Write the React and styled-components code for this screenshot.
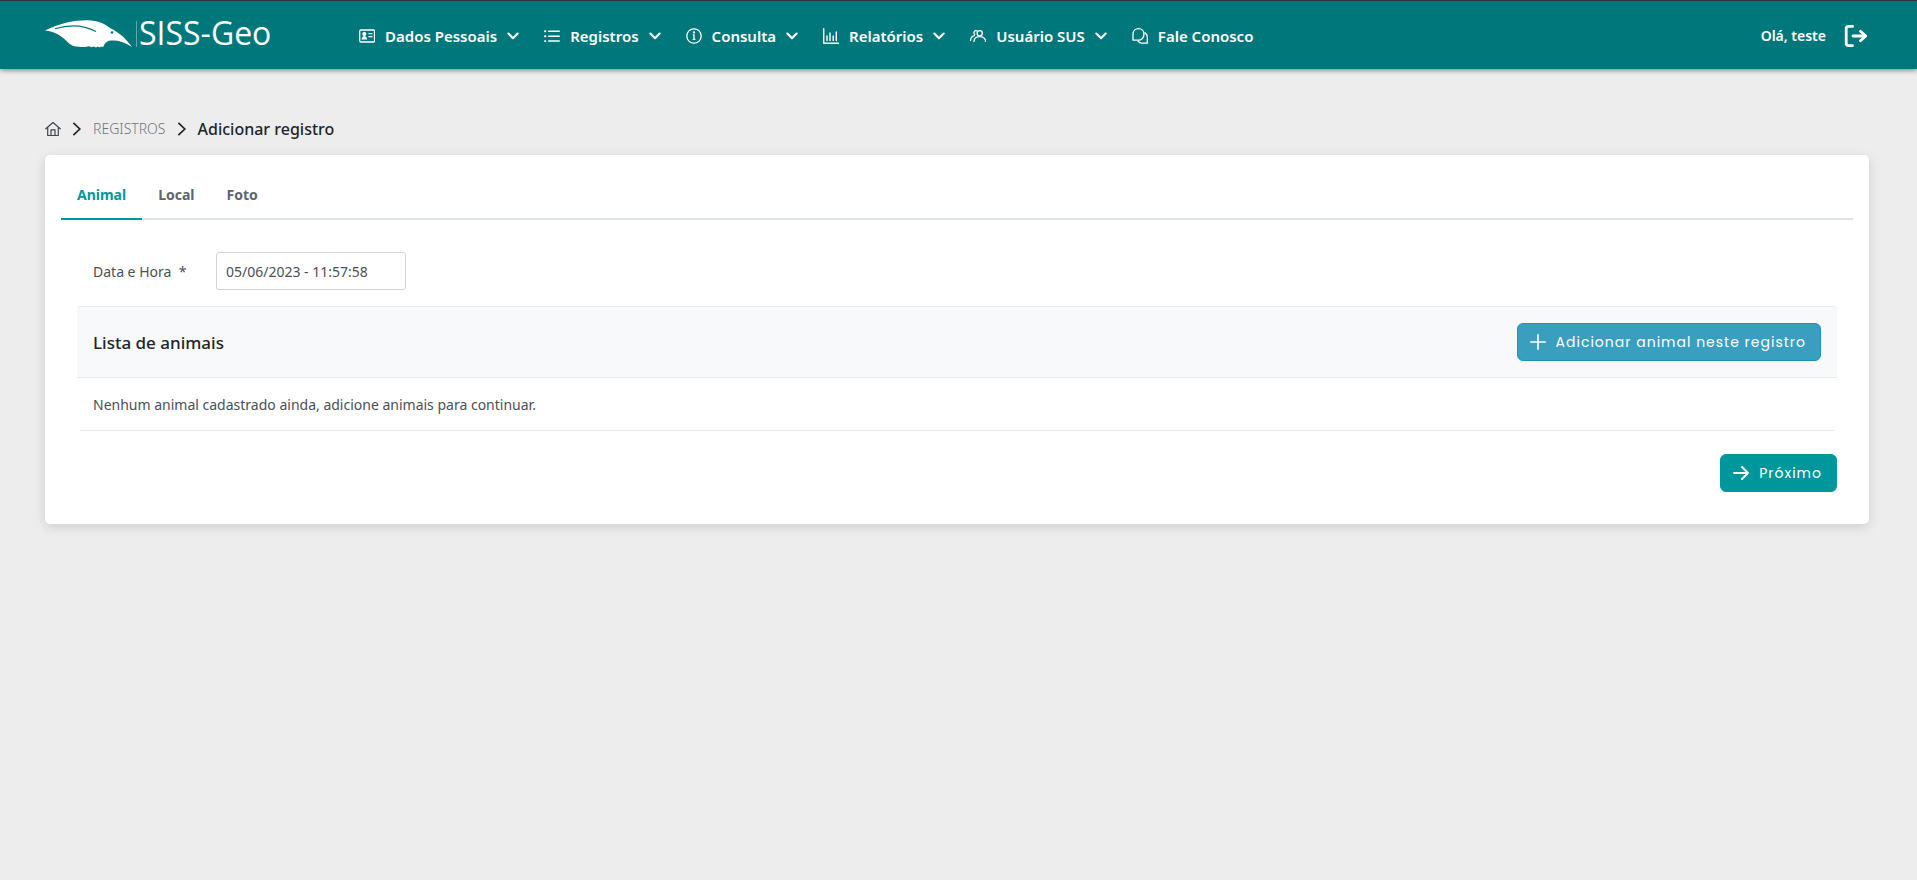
import React, { useState } from "react";
import styled, { createGlobalStyle } from "styled-components";

const GlobalStyle = createGlobalStyle`
  *, *::before, *::after { box-sizing: border-box; }
  body {
    margin: 0;
    background: #ededed;
    color: #212529;
    font-family: "Noto Sans", "Segoe UI", sans-serif;
    font-size: 14px;
    line-height: 24px;
  }
  a { color: inherit; text-decoration: none; }
  button, input { font: inherit; }
`;

const Header = styled.header`
  display: flex;
  align-items: center;
  height: 69px;
  padding: 2px 49px 0 45px;
  background: #00777b;
  border-top: 1px solid #34303c;
  box-shadow: 0 1px 5px rgba(0, 0, 0, 0.5);
  color: #fff;
`;

const Brand = styled.a`
  display: flex;
  align-items: center;
  width: 314px;
  flex: none;
  padding-bottom: 4px;
`;

const BrandName = styled.span`
  margin-left: 4px;
  padding: 0 0 2px 2px;
  border-left: 1px solid #5fa9ac;
  font-family: "Open Sans", sans-serif;
  font-size: 32px;
  font-weight: 500;
  line-height: 24px;
`;

const Nav = styled.nav`
  display: flex;
  align-items: center;
  gap: 25px;
  flex: 1;
`;

const NavButton = styled.button`
  display: flex;
  align-items: center;
  gap: 10px;
  padding: 0;
  border: 0;
  background: none;
  color: #fff;
  font-size: 15px;
  font-weight: 600;
  white-space: nowrap;
  cursor: pointer;
`;

const User = styled.div`
  display: flex;
  align-items: center;
  gap: 18px;
  font-size: 14px;
  font-weight: 600;
  white-space: nowrap;
`;

const IconButton = styled.button`
  display: flex;
  padding: 0;
  border: 0;
  background: none;
  color: inherit;
  cursor: pointer;
`;

const Main = styled.main`
  padding: 48px 48px 48px 45px;
`;

const Breadcrumb = styled.nav`
  display: flex;
  align-items: center;
  gap: 8px;
  height: 24px;
  margin-bottom: 14px;
`;

const Crumb = styled.a`
  display: flex;
  color: ${(p) => (p.$dark ? "#3a4754" : "#6c757d")};
  font-weight: 300;
`;

const PageTitle = styled.h1`
  margin: 0;
  font-size: 16px;
  font-weight: 500;
  line-height: 24px;
`;

const Card = styled.section`
  padding: 16px 16px 32px;
  border-radius: 5px;
  background: #fff;
  box-shadow: 0 3px 12px rgba(0, 0, 0, 0.13);
`;

const TabList = styled.div`
  display: flex;
  border-bottom: 2px solid #dee2e6;
`;

const Tab = styled.button`
  margin-bottom: -2px;
  padding: 12px 16px 11px;
  border: 0;
  border-bottom: 2px solid ${(p) => (p.$active ? "#00979c" : "transparent")};
  background: none;
  color: ${(p) => (p.$active ? "#00979c" : "#5a6570")};
  font-size: 14px;
  font-weight: 700;
  cursor: pointer;
`;

const Panel = styled.div`
  padding: 32px 16px 0;
`;

const Field = styled.div`
  display: flex;
  align-items: center;
  padding-left: 16px;
  margin-bottom: 16px;
`;

const Label = styled.label`
  width: 123px;
  padding-top: 2px;
  color: #495057;
`;

const Input = styled.input`
  width: 190px;
  height: 38px;
  padding: 0 9px;
  border: 1px solid #ced4da;
  border-radius: 3px;
  background: #fff;
  color: #495057;
`;

const ListHeader = styled.header`
  display: flex;
  align-items: center;
  justify-content: space-between;
  padding: 16px;
  border: solid #e7eaed;
  border-width: 1px 0;
  border-radius: 4px 4px 0 0;
  background: #f8f9fb;
`;

const ListTitle = styled.h2`
  margin: 0;
  padding-top: 2px;
  font-size: 17px;
  font-weight: 500;
`;

const EmptyRow = styled.p`
  margin: 0 3px 23px;
  padding: 15px 13px 13px;
  border-bottom: 1px solid #e7eaed;
  color: #495057;
`;

const Actions = styled.div`
  display: flex;
  justify-content: flex-end;
`;

const Button = styled.button`
  display: flex;
  align-items: center;
  gap: 10px;
  height: 38px;
  padding: 0 14px 0 12px;
  border: 1px solid ${(p) => (p.$tone === "info" ? "#1994b6" : "#00979c")};
  border-radius: 6px;
  background: ${(p) => (p.$tone === "info" ? "#3a9ebf" : "#00979c")};
  color: #fff;
  font-family: Poppins, "Inter", sans-serif;
  font-size: 14px;
  font-weight: 400;
  letter-spacing: 1px;
  cursor: pointer;
`;

const Svg = ({ size = 16, width = 1.2, children }) => (
  <svg
    width={size}
    height={size}
    viewBox="0 0 16 16"
    fill="none"
    stroke="currentColor"
    strokeWidth={width}
    strokeLinecap="round"
    strokeLinejoin="round"
    aria-hidden="true"
  >
    {children}
  </svg>
);

const IdCard = () => (
  <Svg width="1.3">
    <rect x="0.7" y="2" width="14.8" height="12" rx="1.2" />
    <circle cx="5.3" cy="6" r="1.4" fill="currentColor" />
    <path d="M2.9 11c0-3.6 4.8-3.6 4.8 0z" fill="currentColor" strokeWidth="0.6" />
    <path d="M10 5.7h3M10 8.7h3" />
  </Svg>
);

const ListIcon = () => (
  <Svg width="1.5">
    <path d="M4.7 3.3h10.5M4.7 8.2h10.5M4.7 13.1h10.5" />
    <path d="M1 3.3h.4M1 8.2h.4M1 13.1h.4" strokeWidth="1.9" />
  </Svg>
);

const InfoIcon = () => (
  <Svg width="1.3">
    <circle cx="8" cy="8" r="7.2" />
    <path d="M7.2 6.8H8v4.4M7 11.3h2" />
    <circle cx="8" cy="4.5" r="0.5" fill="currentColor" />
  </Svg>
);

const ChartIcon = () => (
  <Svg width="1.4">
    <path d="M0.7 0.7v14.6h14.8M4 8v4.5M7 5v7.5M10.2 8v4.5M13.3 4v8.5" />
  </Svg>
);

const PeopleIcon = () => (
  <Svg width="1.3">
    <circle cx="9.7" cy="5.2" r="2.6" />
    <path d="M4 13.4c0-6.5 11.2-6.5 11.6 0M7 2.9C4.6 1.7 2.9 4.5 4.7 6.5M.6 12.4c0-2.5 1.4-4.2 3.8-4.8" />
  </Svg>
);

const ChatIcon = () => (
  <Svg width="1.3">
    <path d="M1 12.2V6.3C1 3 3.4.7 6.5.7s5.5 2.3 5.5 5.6-2.4 5.9-5.5 5.9z" />
    <path d="M13 4.9c1.5.9 2.3 2.3 2.3 4v6.3h-5.4c-1.7 0-3-.7-3.8-2" />
  </Svg>
);

const ChevronDown = () => (
  <Svg size={12} width="2.8">
    <path d="M1.8 4.8l6.2 6.2 6.2-6.2" />
  </Svg>
);

const ChevronRight = () => (
  <Svg width="1.7">
    <path d="M4.4 1.8l6.4 6.2-6.4 6.2" strokeLinecap="butt" strokeLinejoin="miter" />
  </Svg>
);

const HomeIcon = () => (
  <Svg>
    <path d="M0.8 7.8L8 1.5l7.2 6.3M2.7 6.5v8h10.6v-8M6 14.3V8.8h4v5.5" />
  </Svg>
);

const LogoutIcon = () => (
  <svg
    width="24"
    height="24"
    viewBox="0 0 24 24"
    fill="none"
    stroke="currentColor"
    strokeWidth="2.8"
    strokeLinecap="round"
    strokeLinejoin="round"
    aria-hidden="true"
  >
    <path d="M8.6 2.4H4.5q-2.3 0-2.3 2.3v14.6q0 2.3 2.3 2.3h4.1" />
    <path d="M9 12h12.5M16.5 7.2l5.2 4.8-5.2 4.8" />
  </svg>
);

const PlusIcon = () => (
  <Svg width="1.6">
    <path d="M8 .8v14.4M.8 8h14.4" />
  </Svg>
);

const ArrowIcon = () => (
  <Svg width="1.9">
    <path d="M1 8h14M9 2l6 6-6 6" />
  </Svg>
);

const BirdLogo = () => (
  <svg width="87" height="28" viewBox="0 0 87 28" aria-hidden="true">
    <path
      fill="#fff"
      d="M0 10.5C16 2.5 30 0 43 .2 52 .5 59 3 66 8.5c8 4 15 10 21 18.7C79 22 74 20.5 66 20.6c-3 0-4.5 1.6-6 3-.8.7-1 2.5-2 3.4l-2-.4-1 .8-2.5-.8-1.5.8-2.5-.8-2 .6-2-1-2 .4c-5 1-13 .6-17-2C18 18 14 12 0 10.5z"
    />
    <path fill="none" stroke="#00777b" strokeWidth="1.2" d="M10 8.7C24 4.5 39 5 51 11.5" />
    <circle cx="67" cy="12.5" r="1.3" fill="#00777b" />
  </svg>
);

const MENU = [
  { label: "Dados Pessoais", Icon: IdCard, menu: true },
  { label: "Registros", Icon: ListIcon, menu: true },
  { label: "Consulta", Icon: InfoIcon, menu: true },
  { label: "Relatórios", Icon: ChartIcon, menu: true },
  { label: "Usuário SUS", Icon: PeopleIcon, menu: true },
  { label: "Fale Conosco", Icon: ChatIcon, menu: false },
];

const TABS = ["Animal", "Local", "Foto"];

export default function App() {
  const [tab, setTab] = useState("Animal");
  const [date, setDate] = useState("05/06/2023 - 11:57:58");

  return (
    <>
      <GlobalStyle />
      <Header>
        <Brand href="#">
          <BirdLogo />
          <BrandName>SISS-Geo</BrandName>
        </Brand>
        <Nav>
          {MENU.map(({ label, Icon, menu }) => (
            <NavButton key={label} type="button">
              <Icon />
              {label}
              {menu && <ChevronDown />}
            </NavButton>
          ))}
        </Nav>
        <User>
          Olá, teste
          <IconButton type="button" aria-label="Sair">
            <LogoutIcon />
          </IconButton>
        </User>
      </Header>
      <Main>
        <Breadcrumb>
          <Crumb href="#" $dark aria-label="Início">
            <HomeIcon />
          </Crumb>
          <ChevronRight />
          <Crumb href="#">REGISTROS</Crumb>
          <ChevronRight />
          <PageTitle>Adicionar registro</PageTitle>
        </Breadcrumb>
        <Card>
          <TabList role="tablist">
            {TABS.map((name) => (
              <Tab
                key={name}
                type="button"
                role="tab"
                aria-selected={tab === name}
                $active={tab === name}
                onClick={() => setTab(name)}
              >
                {name}
              </Tab>
            ))}
          </TabList>
          <Panel>
            <Field>
              <Label htmlFor="date">Data e Hora &nbsp;*</Label>
              <Input id="date" value={date} onChange={(e) => setDate(e.target.value)} />
            </Field>
            <ListHeader>
              <ListTitle>Lista de animais</ListTitle>
              <Button type="button" $tone="info">
                <PlusIcon />
                Adicionar animal neste registro
              </Button>
            </ListHeader>
            <EmptyRow>Nenhum animal cadastrado ainda, adicione animais para continuar.</EmptyRow>
            <Actions>
              <Button type="button">
                <ArrowIcon />
                Próximo
              </Button>
            </Actions>
          </Panel>
        </Card>
      </Main>
    </>
  );
}
